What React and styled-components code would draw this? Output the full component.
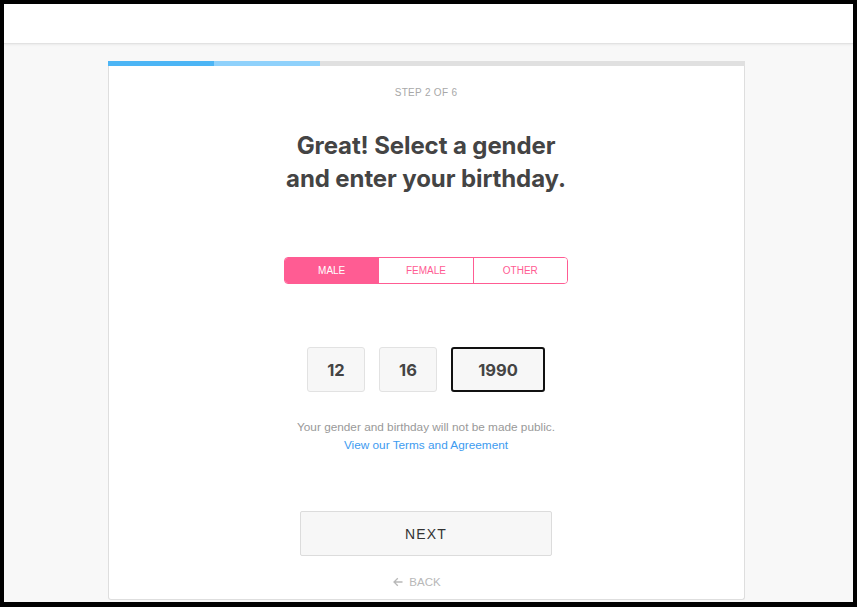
import React, { useState } from "react";
import styled, { createGlobalStyle } from "styled-components";

const GlobalStyle = createGlobalStyle`
  html, body {
    margin: 0;
    padding: 0;
    background: #000;
  }
  * { box-sizing: border-box; }
`;

const Frame = styled.div`
  margin: 4px 4px 5px 4px;
  height: 598px;
  background: #f8f8f8;
  display: flex;
  flex-direction: column;
  overflow: hidden;
`;

const Header = styled.div`
  height: 40px;
  flex-shrink: 0;
  background: #fff;
  border-bottom: 1px solid #e2e2e2;
  box-shadow: 0 1px 2px rgba(0, 0, 0, 0.06);
`;

const Main = styled.div`
  flex: 1;
  padding: 17px 108px 0 104px;
  display: flex;
`;

const Card = styled.div`
  flex: 1;
  background: #fff;
  border: 1px solid #dedede;
  border-top: none;
  border-radius: 0 0 3px 3px;
  display: flex;
  flex-direction: column;
  align-items: center;
  height: 539px;
  padding-right: 1px;
`;

const Progress = styled.div`
  align-self: stretch;
  height: 5px;
  background: #e0e0e0;
  margin: 0 -2px 0 -1px;
  display: flex;
`;

const Segment = styled.div`
  width: 106px;
  background: ${(p) => p.color};
`;

const Step = styled.div`
  margin-top: 21px;
  font-family: "Liberation Sans", Arial, sans-serif;
  font-size: 10px;
  letter-spacing: 0.3px;
  color: #a8a8a8;
  line-height: 12px;
`;

const Title = styled.h1`
  margin: 30px 0 0;
  font-family: Inter, "Open Sans", sans-serif;
  font-weight: 700;
  font-size: 24px;
  letter-spacing: -0.1px;
  line-height: 33px;
  color: #444;
  text-align: center;
`;

const Toggle = styled.div`
  margin-top: 62px;
  display: flex;
  width: 284px;
  height: 27px;
  border: 1px solid #ff5c93;
  border-radius: 4px;
  overflow: hidden;
`;

const ToggleBtn = styled.button`
  flex: 1;
  border: none;
  border-left: ${(p) => (p.first ? "none" : "1px solid #ff5c93")};
  background: ${(p) => (p.active ? "#ff5c93" : "#fff")};
  color: ${(p) => (p.active ? "#fff" : "#ff5c93")};
  font-family: "Liberation Sans", Arial, sans-serif;
  font-size: 10px;
  padding: 0;
  cursor: pointer;
`;

const DateRow = styled.div`
  margin-top: 63px;
  display: flex;
  gap: 14px;
`;

const DateInput = styled.input`
  width: ${(p) => p.w}px;
  height: 45px;
  border: ${(p) => (p.focused ? "2px solid #111" : "1px solid #e2e2e2")};
  border-radius: 3px;
  background: #f7f7f7;
  text-align: center;
  font-family: Inter, "Open Sans", sans-serif;
  font-weight: 700;
  font-size: 16.5px;
  color: #444;
  outline: none;
  padding: 0;
`;

const Note = styled.div`
  margin-top: 26px;
  font-family: "Liberation Sans", Arial, sans-serif;
  font-size: 11.8px;
  line-height: 18px;
  color: #999;
  text-align: center;
`;

const Link = styled.a`
  display: block;
  color: #3d9bf0;
  text-decoration: none;
`;

const NextButton = styled.button`
  margin-top: 57px;
  width: 252px;
  height: 45px;
  background: #f7f7f7;
  border: 1px solid #dcdcdc;
  border-radius: 2px;
  font-family: "Liberation Sans", Arial, sans-serif;
  font-size: 14px;
  letter-spacing: 1.2px;
  color: #333;
  cursor: pointer;
`;

const Back = styled.div`
  margin: 20px 18px 0 0;
  display: flex;
  align-items: center;
  gap: 6px;
  font-family: "Liberation Sans", Arial, sans-serif;
  font-size: 11.5px;
  color: #b8b8b8;
`;

function App() {
  const [gender, setGender] = useState("MALE");
  const [month, setMonth] = useState("12");
  const [day, setDay] = useState("16");
  const [year, setYear] = useState("1990");

  return (
    <>
      <GlobalStyle />
      <Frame>
        <Header />
        <Main>
          <Card>
            <Progress>
              <Segment color="#4cb5f5" />
              <Segment color="#8fd1fb" />
            </Progress>
            <Step>STEP 2 OF 6</Step>
            <Title>
              Great! Select a gender
              <br />
              and enter your birthday.
            </Title>
            <Toggle>
              {["MALE", "FEMALE", "OTHER"].map((g, i) => (
                <ToggleBtn
                  key={g}
                  first={i === 0}
                  active={gender === g}
                  onClick={() => setGender(g)}
                >
                  {g}
                </ToggleBtn>
              ))}
            </Toggle>
            <DateRow>
              <DateInput w={58} value={month} onChange={(e) => setMonth(e.target.value)} />
              <DateInput w={58} value={day} onChange={(e) => setDay(e.target.value)} />
              <DateInput w={94} focused value={year} onChange={(e) => setYear(e.target.value)} />
            </DateRow>
            <Note>
              Your gender and birthday will not be made public.
              <Link href="#">View our Terms and Agreement</Link>
            </Note>
            <NextButton>NEXT</NextButton>
            <Back>
              <svg width="10" height="10" viewBox="0 0 10 10">
                <path d="M9.5 5H1M4.8 1.2L1 5L4.8 8.8" stroke="#b8b8b8" strokeWidth="1.3" fill="none" />
              </svg>
              BACK
            </Back>
          </Card>
        </Main>
      </Frame>
    </>
  );
}

export default App;
